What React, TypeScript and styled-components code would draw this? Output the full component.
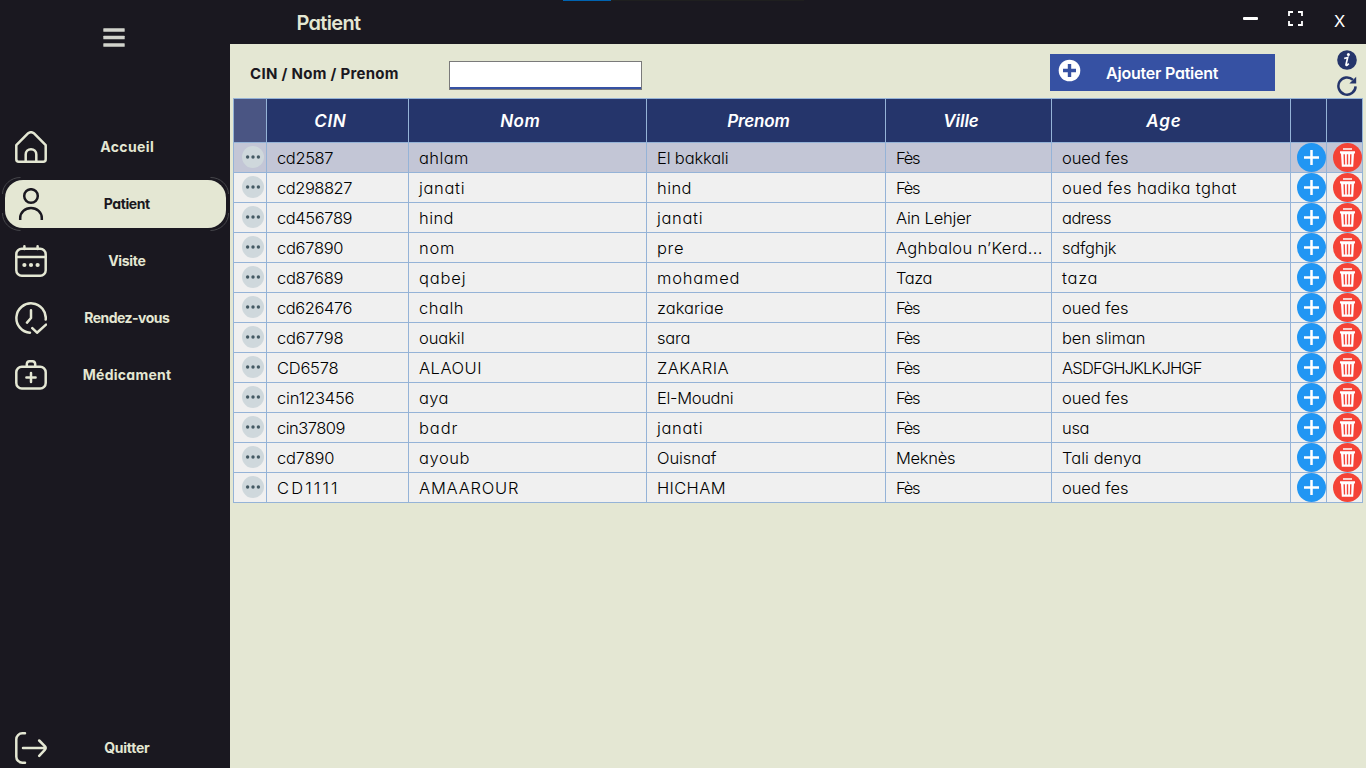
import React, { useLayoutEffect, useRef, useState } from 'react';
import styled, { createGlobalStyle, css } from 'styled-components';

const GlobalStyle = createGlobalStyle`
  * { box-sizing: border-box; }
  html, body { margin: 0; padding: 0; overflow: hidden; }
  body {
    font-family: Inter, Lato, "Liberation Sans", sans-serif;
    font-feature-settings: "cv11" 1;
    color: #000;
  }
  svg { display: block; }
`;

const NIGHT = '#1a1820';
const CREAM = '#e4e7d3';
const NAVY = '#25356b';
const ROYAL = '#3651a3';
const LINE = '#95b3d7';

const Window = styled.div`
  position: relative;
  display: flex;
  width: 1366px;
  height: 768px;
  background: ${CREAM};
`;

const LoadStrip = styled.div`
  position: absolute;
  top: 0;
  left: 563px;
  width: 241px;
  height: 1px;
  background: linear-gradient(to right, #0063b1 48px, #1f1f1f 48px);
`;

const Sidebar = styled.aside`
  display: flex;
  flex-direction: column;
  width: 230px;
  height: 768px;
  padding: 0 4px 0 5px;
  background: ${NIGHT};
`;

const MenuToggle = styled.div`
  margin: 28px 0 0 98px;
  height: 95px;
`;

const Nav = styled.nav`
  display: flex;
  flex-direction: column;
  gap: 9px;
`;

const NavItem = styled.div<{ $active?: boolean }>`
  position: relative;
  display: flex;
  align-items: center;
  width: 221px;
  height: 48px;
  padding-left: 10px;
  border-radius: 18px;
  background: ${(p) => (p.$active ? CREAM : 'transparent')};
  color: ${(p) => (p.$active ? NIGHT : CREAM)};
`;

const NavIcon = styled.span`
  width: 32px;
  height: 32px;
`;

const NavLabel = styled.span`
  display: flex;
  justify-content: center;
  width: 160px;
  font-size: 14px;
  line-height: 20px;
  font-weight: 700;
`;

const Halo = styled.svg`
  position: absolute;
  left: -4px;
  top: -4px;
`;

const Footer = styled.div`
  margin-top: auto;
  margin-bottom: -4px;
`;

const Main = styled.main`
  display: flex;
  flex-direction: column;
  width: 1136px;
`;

const TitleBar = styled.header`
  display: flex;
  align-items: flex-start;
  height: 44px;
  padding-left: 66.5px;
  background: ${NIGHT};
`;

const Title = styled.h1`
  flex: 1;
  margin: 0;
  padding-top: 11px;
  font-size: 20px;
  line-height: 24px;
  font-weight: 600;
  color: ${CREAM};
`;

const WindowButtons = styled.div`
  display: flex;
  align-items: flex-start;
  padding: 11px 21px 0 0;
  color: #fff;
`;

const MinimizeBar = styled.span`
  width: 15px;
  height: 3px;
  margin: 6px 30px 0 0;
  border-radius: 1px;
  background: #fff;
`;

const CloseMark = styled.span`
  width: 11px;
  margin-left: 31px;
  font-size: 16.5px;
  line-height: 20px;
`;

const Toolbar = styled.div`
  display: flex;
  align-items: flex-start;
  height: 54px;
  padding: 0 9px 0 20px;
`;

const SearchLabel = styled.label`
  width: 199px;
  padding-top: 20px;
  font-size: 15px;
  line-height: 20px;
  font-weight: 700;
  color: ${NIGHT};
`;

const SearchField = styled.div`
  width: 193px;
  height: 29px;
  margin-top: 17px;
  border: 1px solid #7a7a7a;
  background: linear-gradient(to top, ${ROYAL} 2px, #fff 2px);
`;

const AddButton = styled.button`
  display: flex;
  align-items: flex-start;
  width: 225px;
  height: 37px;
  margin: 10px 0 0 408px;
  padding: 5px 0 0 8px;
  border: 0;
  background: ${ROYAL};
  color: #fff;
  font-family: inherit;
  font-feature-settings: inherit;
  font-size: 16px;
  line-height: 20px;
  font-weight: 600;
  text-align: left;
`;

const AddLabel = styled.span`
  margin: 4px 0 0 25px;
`;

const ToolIcons = styled.div`
  display: flex;
  flex-direction: column;
  gap: 6px;
  margin: 6px 0 0 auto;
`;

const Table = styled.section`
  width: 1130px;
  margin-left: 3px;
  border-left: 1px solid ${LINE};
  border-top: 1px solid ${LINE};
`;

const columns = css`
  display: grid;
  grid-template-columns: 33px 142px 238px 239px 166px 239px 36px 36px;
`;

const HeadRow = styled.div`
  ${columns}
  height: 44px;
`;

const HeadCell = styled.div<{ $dim?: boolean }>`
  display: flex;
  align-items: center;
  justify-content: center;
  padding: 1px 15px 0 0;
  border-right: 1px solid ${LINE};
  border-bottom: 1px solid ${LINE};
  background: ${(p) => (p.$dim ? '#4a5583' : NAVY)};
  color: #fff;
  font-size: 17px;
  font-style: italic;
  font-weight: 600;
`;

const Row = styled.div<{ $selected?: boolean }>`
  ${columns}
  height: 30px;
  background: ${(p) => (p.$selected ? '#c3c6d6' : '#f0f0f0')};
`;

const Cell = styled.div`
  display: flex;
  align-items: center;
  padding: 1px 0 0 10px;
  border-right: 1px solid ${LINE};
  border-bottom: 1px solid ${LINE};
  font-size: 16.5px;
  font-weight: 300;
  line-height: 20px;
`;

const IconCell = styled.div<{ $more?: boolean }>`
  display: flex;
  align-items: flex-start;
  justify-content: ${(p) => (p.$more ? 'flex-start' : 'flex-end')};
  padding: ${(p) => (p.$more ? '3px 0 0 8px' : '0')};
  border-right: 1px solid ${LINE};
  border-bottom: 1px solid ${LINE};
`;

const Tracked = styled.span`
  display: inline-block;
  white-space: pre;
`;

/* Spreads a label's tracking so that it fills the given width. */
function Label({ text, width }: { text: string; width: number }) {
  const ref = useRef<HTMLSpanElement>(null);
  const [tracking, setTracking] = useState(0);
  useLayoutEffect(() => {
    const el = ref.current;
    if (!el) return;
    const natural = el.getBoundingClientRect().width - tracking * text.length;
    setTracking((width + 0.5 - natural) / (text.length - 1));
  }, [text, width]);
  return (
    <Tracked ref={ref} style={{ letterSpacing: `${tracking}px`, marginRight: `${-tracking}px` }}>
      {text}
    </Tracked>
  );
}

const stroke = {
  width: 32,
  height: 32,
  viewBox: '0 0 32 32',
  fill: 'none',
  stroke: 'currentColor',
  strokeWidth: 2.5,
  strokeLinecap: 'round' as const,
  strokeLinejoin: 'round' as const,
};

const HomeIcon = () => (
  <svg {...stroke}>
    <path d="M1.3 14.2 13.2 2.2Q16 0.2 18.8 2.2L30.7 14.2V28.2Q30.7 30.7 28.2 30.7H3.8Q1.3 30.7 1.3 28.2Z" />
    <path d="M10.7 30.5V23.5a5.3 5.3 0 0 1 10.6 0V30.5" />
  </svg>
);
const UserIcon = () => (
  <svg {...stroke} strokeLinecap="butt">
    <circle cx="16" cy="8" r="6.8" />
    <path d="M5.2 32V30a10.8 10 0 0 1 21.6 0V32" />
  </svg>
);
const CalendarIcon = () => (
  <svg {...stroke}>
    <rect x="1.3" y="3.8" width="29.4" height="26.9" rx="5.5" />
    <path d="M1.3 12H30.7M9.4 1.3V4M22.6 1.3V4" />
    <g fill="currentColor" stroke="none">
      <circle cx="9.4" cy="20" r="2.1" />
      <circle cx="16" cy="20" r="2.1" />
      <circle cx="22.6" cy="20" r="2.1" />
    </g>
  </svg>
);
const ClockIcon = () => (
  <svg {...stroke}>
    <path d="M15 30.7A14.7 14.7 0 1 1 30.7 17.6" />
    <path d="M16 8.2V16L12 20.6M17.3 26.2 22 30.7 31 22.6" />
  </svg>
);
const KitIcon = () => (
  <svg {...stroke}>
    <rect x="1.3" y="7.7" width="29.4" height="21.9" rx="5.5" />
    <path d="M11.8 7V5A3 3 0 0 1 14.5 2.3h3A3 3 0 0 1 20.2 5V7M16 14V23M11.4 18.5H20.6" />
  </svg>
);
const ExitIcon = () => (
  <svg {...stroke}>
    <path d="M10 1.3H7.3A6 6 0 0 0 1.3 7.3V24.7A6 6 0 0 0 7.3 30.7H10M8 16H30M24.2 8.5 29.8 14.2Q31.5 16 29.8 17.8L24.2 23.8" />
  </svg>
);
const BurgerIcon = () => (
  <svg width="22" height="19" viewBox="0 0 22 19" fill="#d2d3cc">
    <rect x="0.3" y="0.2" width="21.4" height="3.6" rx="0.6" />
    <rect x="0.3" y="7.7" width="21.4" height="3.6" rx="0.6" />
    <rect x="0.3" y="15.2" width="21.4" height="3.6" rx="0.6" />
  </svg>
);
const ExpandIcon = () => (
  <svg width="15" height="15" viewBox="0 0 15 15" fill="none" stroke="#fff" strokeWidth="1.8">
    <path d="M1 5V1H5M10 1H14V5M14 10V14H10M5 14H1V10" />
  </svg>
);
const InfoIcon = () => (
  <svg width="20" height="20" viewBox="0 0 20 20">
    <circle cx="10" cy="10" r="9.8" fill={NAVY} />
    <circle cx="11.4" cy="4.6" r="1.5" fill="#fff" />
    <path d="M7.2 8.3Q9 8.2 10.7 7.5L9 14.6Q8.9 15.8 10 15.2L11.8 13.6" fill="none" stroke="#fff" strokeWidth="1.7" />
  </svg>
);
const RefreshIcon = () => (
  <svg width="20" height="20" viewBox="0 0 20 20">
    <path d="M18.6 10.4A8.6 8.6 0 1 1 16 3.9" fill="none" stroke={NAVY} strokeWidth="2.5" />
    <path d="M19.2 0.8V7.4H12.4Z" fill={NAVY} />
  </svg>
);
const AddIcon = () => (
  <svg width="23" height="23" viewBox="0 0 23 23">
    <circle cx="11.5" cy="11.5" r="10.8" fill="#fff" />
    <path d="M11.5 5V18M5 11.5H18" stroke={ROYAL} strokeWidth="3.4" />
  </svg>
);
const MoreIcon = () => (
  <svg width="22" height="22" viewBox="0 0 22 22">
    <circle cx="11" cy="11" r="11" fill="#cfd8dc" />
    <g fill="#455a64">
      <circle cx="5.6" cy="11" r="1.7" />
      <circle cx="11" cy="11" r="1.7" />
      <circle cx="16.4" cy="11" r="1.7" />
    </g>
  </svg>
);
const PlusIcon = () => (
  <svg width="29" height="29" viewBox="0 0 29 29">
    <circle cx="14.5" cy="14.5" r="14.5" fill="#2196f3" />
    <path d="M14.5 7V22M7 14.5H22" stroke="#fff" strokeWidth="2.5" />
  </svg>
);
const TrashIcon = () => (
  <svg width="29" height="29" viewBox="0 0 29 29">
    <circle cx="14.5" cy="14.5" r="14.5" fill="#f44336" />
    <path d="M10 5.2H19V6.8H10ZM7 8.2H22V10.6H21L20.2 23.8H8.8L8 10.6H7Z" fill="#fff" />
    <path d="M11.2 11.3 11.5 21.5M14.5 11.3V21.5M17.8 11.3 17.5 21.5" stroke="#f44336" strokeWidth="1.4" />
  </svg>
);

const nav = [
  { text: 'Accueil', width: 53, Icon: HomeIcon },
  { text: 'Patient', width: 46, Icon: UserIcon, active: true },
  { text: 'Visite', width: 37, Icon: CalendarIcon },
  { text: 'Rendez-vous', width: 85, Icon: ClockIcon },
  { text: 'Médicament', width: 88, Icon: KitIcon },
];

const headings: [string, number][] = [
  ['CIN', 31], ['Nom', 39], ['Prenom', 62], ['Ville', 35], ['Age', 34],
];

const patients: [string, number][][] = [
  [['cd2587', 56], ['ahlam', 49], ['El bakkali', 71], ['Fès', 24], ['oued fes', 66]],
  [['cd298827', 75], ['janati', 45], ['hind', 34], ['Fès', 24], ['oued fes hadika tghat', 174]],
  [['cd456789', 75], ['hind', 34], ['janati', 45], ['Ain Lehjer', 75], ['adress', 49]],
  [['cd67890', 66], ['nom', 35], ['pre', 26], ['Aghbalou n’Kerd...', 146], ['sdfghjk', 54]],
  [['cd87689', 66], ['qabej', 46], ['mohamed', 82], ['Taza', 36], ['taza', 35]],
  [['cd626476', 75], ['chalh', 44], ['zakariae', 66], ['Fès', 24], ['oued fes', 66]],
  [['cd67798', 66], ['ouakil', 45], ['sara', 33], ['Fès', 24], ['ben sliman', 83]],
  [['CD6578', 61], ['ALAOUI', 62], ['ZAKARIA', 71], ['Fès', 24], ['ASDFGHJKLKJHGF', 140]],
  [['cin123456', 77], ['aya', 29], ['El-Moudni', 76], ['Fès', 24], ['oued fes', 66]],
  [['cin37809', 68], ['badr', 38], ['janati', 45], ['Fès', 24], ['usa', 27]],
  [['cd7890', 57], ['ayoub', 50], ['Ouisnaf', 59], ['Meknès', 59], ['Tali denya', 79]],
  [['CD1111', 60], ['AMAAROUR', 99], ['HICHAM', 68], ['Fès', 24], ['oued fes', 66]],
];

const ActiveHalo = () => (
  <Halo width="229" height="56" viewBox="0 0 229 56" fill="none" stroke="#45454a" strokeWidth="1">
    <path d="M1.5 18A18 17 0 0 1 19.5 1.5M209.5 1.5A18 17 0 0 1 227.5 18M227.5 37A18 17 0 0 1 209.5 54.5M19.5 54.5A18 17 0 0 1 1.5 37" />
  </Halo>
);

export default function App() {
  return (
    <>
      <GlobalStyle />
      <Window>
        <Sidebar>
          <MenuToggle><BurgerIcon /></MenuToggle>
          <Nav>
            {nav.map(({ text, width, Icon, active }) => (
              <NavItem key={text} $active={active}>
                {active && <ActiveHalo />}
                <NavIcon><Icon /></NavIcon>
                <NavLabel><Label text={text} width={width} /></NavLabel>
              </NavItem>
            ))}
          </Nav>
          <Footer>
            <NavItem>
              <NavIcon><ExitIcon /></NavIcon>
              <NavLabel><Label text="Quitter" width={45} /></NavLabel>
            </NavItem>
          </Footer>
        </Sidebar>
        <Main>
          <TitleBar>
            <Title><Label text="Patient" width={64} /></Title>
            <WindowButtons>
              <MinimizeBar />
              <ExpandIcon />
              <CloseMark>X</CloseMark>
            </WindowButtons>
          </TitleBar>
          <Toolbar>
            <SearchLabel><Label text="CIN / Nom / Prenom" width={148} /></SearchLabel>
            <SearchField />
            <AddButton>
              <AddIcon />
              <AddLabel><Label text="Ajouter Patient" width={112} /></AddLabel>
            </AddButton>
            <ToolIcons>
              <InfoIcon />
              <RefreshIcon />
            </ToolIcons>
          </Toolbar>
          <Table>
            <HeadRow>
              <HeadCell $dim />
              {headings.map(([text, width]) => (
                <HeadCell key={text}><Label text={text} width={width} /></HeadCell>
              ))}
              <HeadCell />
              <HeadCell />
            </HeadRow>
            {patients.map((cells, i) => (
              <Row key={i} $selected={i === 0}>
                <IconCell $more><MoreIcon /></IconCell>
                {cells.map(([text, width], c) => (
                  <Cell key={c}><Label text={text} width={width} /></Cell>
                ))}
                <IconCell><PlusIcon /></IconCell>
                <IconCell><TrashIcon /></IconCell>
              </Row>
            ))}
          </Table>
        </Main>
        <LoadStrip />
      </Window>
    </>
  );
}
